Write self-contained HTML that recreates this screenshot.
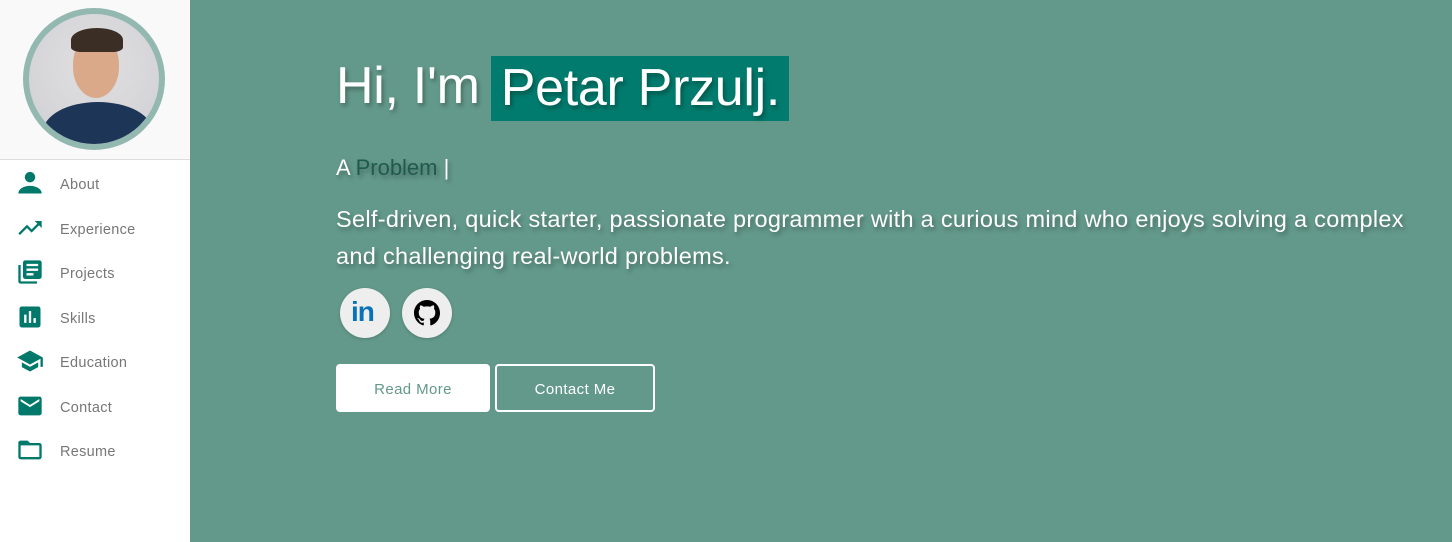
<!DOCTYPE html>
<html><head><meta charset="utf-8"><style>
*{margin:0;padding:0;box-sizing:border-box}
body{width:1452px;height:542px;overflow:hidden;font-family:"Liberation Sans",sans-serif;background:#63998a;position:relative}
.side{position:absolute;left:0;top:0;width:190px;height:542px;background:#fff}
.top{height:160px;background:#f9f9f9;border-bottom:1px solid #ddd;position:relative}
.av{position:absolute;left:23px;top:8px;width:142px;height:142px;border-radius:50%;border:6px solid #93b8b0;background:radial-gradient(circle at 50% 40%,#e0dfe0,#cfcfd3);overflow:hidden}
.face{position:absolute;left:44px;top:22px;width:46px;height:62px;border-radius:45% 45% 50% 50%;background:#d9a98a}
.hair{position:absolute;left:42px;top:14px;width:52px;height:24px;border-radius:50% 50% 20% 20%;background:#3b2e25}
.shirt{position:absolute;left:14px;top:88px;width:110px;height:60px;border-radius:50% 50% 0 0;background:#1d3557}
.nav{position:absolute;left:0;width:190px;height:20px;font-size:14.5px;color:#777;letter-spacing:.3px}
.nav svg{position:absolute;left:16px;top:-6px;width:28px;height:28px;fill:#00796b}
.nav span{position:absolute;left:60px;top:2px}
.main{position:absolute;left:336px;color:#fff;text-shadow:2px 3px 4px rgba(0,0,0,.3);white-space:nowrap}
h1{position:absolute;left:336px;top:56px;font-weight:300;font-size:52px;color:#fff;text-shadow:2px 3px 4px rgba(0,0,0,.3);white-space:nowrap;letter-spacing:-.3px}
h1 b{font-weight:300;background:#017b6d;padding:0 9px 0 10px;display:inline-block;height:65px;line-height:64px;vertical-align:top;margin-left:-3px}
.btn{position:absolute;top:364px;height:48px;border-radius:4px;font-size:15px;text-align:center;line-height:51px;letter-spacing:.4px}
.circ{position:absolute;top:288px;width:50px;height:50px;border-radius:50%;background:#eee;box-shadow:0 1px 3px rgba(0,0,0,.2)}
</style></head><body>
<div class="side">
 <div class="top"><div class="av"><div class="shirt"></div><div class="face"></div><div class="hair"></div></div></div>
 <div class="nav" style="top:175px"><svg viewBox="0 0 24 24"><circle cx="12" cy="7" r="4.5"/><path d="M2 21c0-4 5-6.5 10-6.5s10 2.5 10 6.5z"/></svg><span>About</span></div>
 <div class="nav" style="top:220px"><svg viewBox="0 0 24 24"><path d="M16 6l2.3 2.3-4.9 4.9-4-4L2 16.6 3.4 18l6-6 4 4 6.3-6.3L22 12V6z"/></svg><span>Experience</span></div>
 <div class="nav" style="top:264px"><svg viewBox="0 0 24 24"><path d="M4 6H2v14c0 1.1.9 2 2 2h14v-2H4zm16-4H8c-1.1 0-2 .9-2 2v12c0 1.1.9 2 2 2h12c1.1 0 2-.9 2-2V4c0-1.1-.9-2-2-2zm-1 9H9V9h10zm-4 4H9v-2h6zm4-8H9V5h10z"/></svg><span>Projects</span></div>
 <div class="nav" style="top:309px"><svg viewBox="0 0 24 24"><path d="M19 3H5c-1.1 0-2 .9-2 2v14c0 1.1.9 2 2 2h14c1.1 0 2-.9 2-2V5c0-1.1-.9-2-2-2zM9 17H7v-7h2zm4 0h-2V7h2zm4 0h-2v-4h2z"/></svg><span>Skills</span></div>
 <div class="nav" style="top:353px"><svg viewBox="0 0 24 24"><path d="M5 13.2v4L12 21l7-3.8v-4L12 17zM12 3L1 9l11 6 9-4.9V17h2V9z"/></svg><span>Education</span></div>
 <div class="nav" style="top:398px"><svg viewBox="0 0 24 24"><path d="M20 4H4c-1.1 0-2 .9-2 2v12c0 1.1.9 2 2 2h16c1.1 0 2-.9 2-2V6c0-1.1-.9-2-2-2zm0 4l-8 5-8-5V6l8 5 8-5z"/></svg><span>Contact</span></div>
 <div class="nav" style="top:442px"><svg viewBox="0 0 24 24"><path d="M20 6h-8l-2-2H4c-1.1 0-2 .9-2 2v12c0 1.1.9 2 2 2h16c1.1 0 2-.9 2-2V8c0-1.1-.9-2-2-2zm0 12H4V8h16z"/></svg><span>Resume</span></div>
</div>
<h1>Hi, I'm <b>Petar Przulj.</b></h1>
<div class="main" style="top:155px;font-size:22px;font-weight:300">A <span style="color:#1f5a50">Problem</span> |</div>
<div class="main" style="top:201px;font-size:23.5px;line-height:37px;letter-spacing:.3px">Self-driven, quick starter, passionate programmer with a curious mind who enjoys solving a complex<br>and challenging real-world problems.</div>
<div class="circ" style="left:340px"><div style="position:absolute;left:11px;top:8px;font:bold 28px 'Liberation Sans',sans-serif;color:#0a72b8;letter-spacing:-1px">in</div></div>
<div class="circ" style="left:402px"><svg viewBox="0 0 16 16" style="position:absolute;left:12px;top:12px;width:26px;height:26px"><path fill="#000" d="M8 0C3.58 0 0 3.58 0 8c0 3.54 2.29 6.53 5.47 7.59.4.07.55-.17.55-.38v-1.33c-2.23.49-2.69-1.07-2.69-1.07-.36-.92-.89-1.17-.89-1.17-.73-.5.05-.49.05-.49.8.06 1.23.83 1.23.83.71 1.22 1.87.87 2.33.66.07-.52.28-.87.51-1.07-1.78-.2-3.64-.89-3.64-3.95 0-.87.31-1.59.82-2.15-.08-.2-.36-1.02.08-2.12 0 0 .67-.21 2.2.82.64-.18 1.32-.27 2-.27.68 0 1.36.09 2 .27 1.53-1.04 2.2-.82 2.2-.82.44 1.1.16 1.92.08 2.12.51.56.82 1.27.82 2.15 0 3.07-1.87 3.75-3.65 3.95.29.25.54.73.54 1.48v2.2c0 .21.15.46.55.38A8.01 8.01 0 0 0 16 8c0-4.42-3.58-8-8-8z"/></svg></div>
<div class="btn" style="left:336px;width:154px;background:#fff;color:#63998a">Read More</div>
<div class="btn" style="left:495px;width:160px;border:2px solid #fff;color:#fff;line-height:47px">Contact Me</div>
</body></html>
